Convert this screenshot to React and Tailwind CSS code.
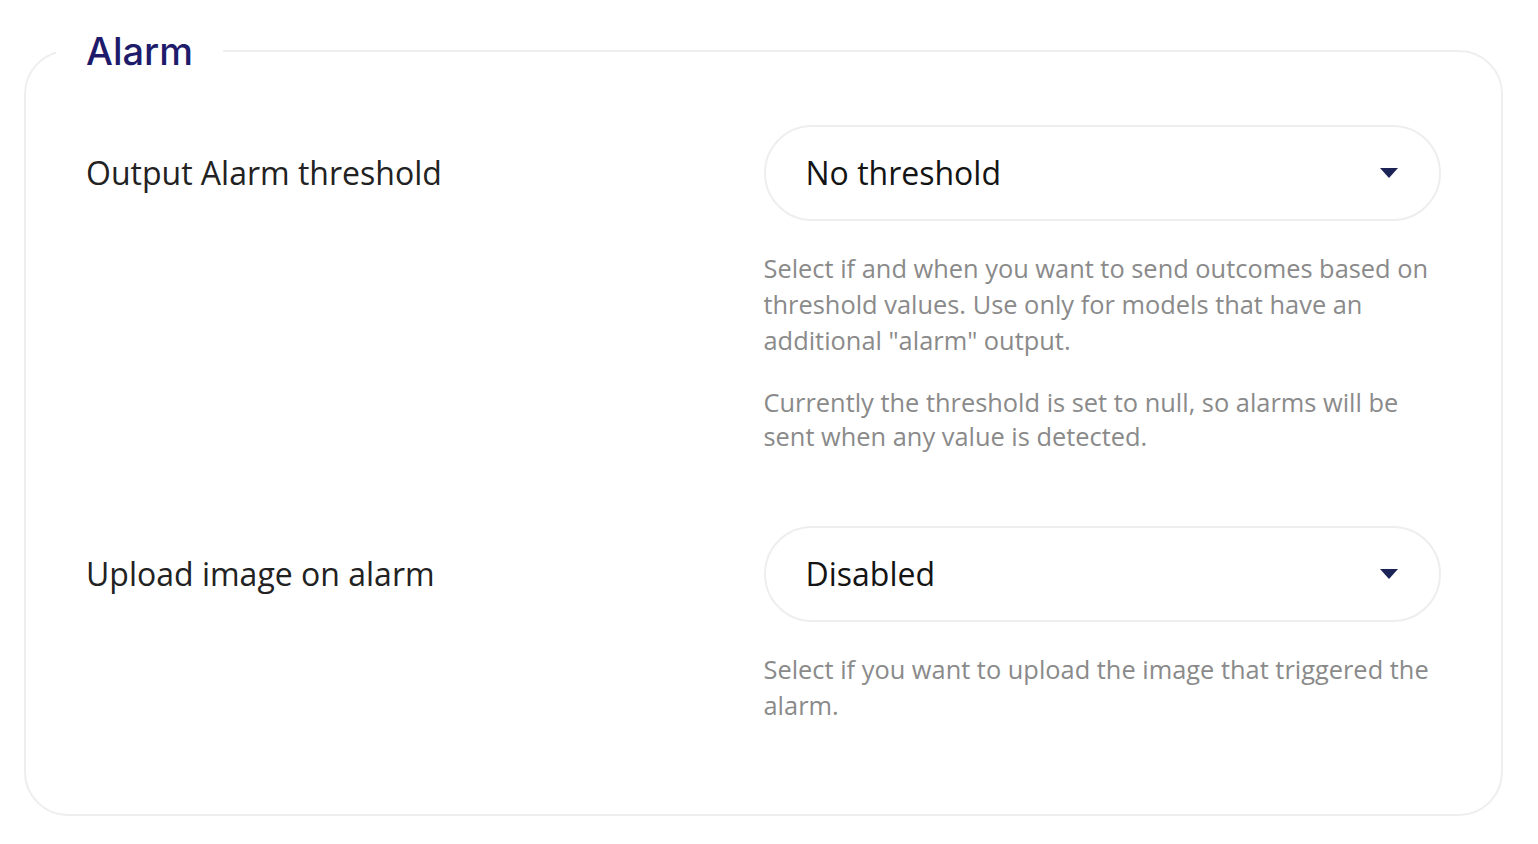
import React from 'react';

const Caret = () => (
  <svg width="20" height="12" viewBox="0 0 20 12" className="shrink-0">
    <path d="M1 1h18L10 11z" fill="#1c2457" />
  </svg>
);

const SettingRow = ({ label, value, children }) => (
  <div className="grid grid-cols-2">
    <div className="flex h-[96px] items-center text-[32px] text-[#222222]">{label}</div>
    <div className="flex flex-col">
      <button className="flex h-[96px] w-full items-center justify-between rounded-full border-2 border-[#eeeeee] pl-[40px] pr-[40px] text-left text-[32px] text-[#141414]">
        <span>{value}</span>
        <Caret />
      </button>
      <div className="mt-[29px] flex flex-col gap-[27px] text-[25.4px] leading-[36px] text-[#8a8a8a]">
        {children}
      </div>
    </div>
  </div>
);

export default function App() {
  return (
    <div className="min-h-screen bg-white pt-[29px] font-['Open_Sans',sans-serif]">
      <fieldset className="ml-[24px] w-[1479px] rounded-[44px] border-2 border-[#eeeeee] px-[30px] pb-[91px]">
        <legend className="px-[30px] font-['Inter',sans-serif] text-[38px] font-medium leading-[44px] text-[#1f1b6b]">
          Alarm
        </legend>
        <div className="flex flex-col gap-[73px] px-[30px] pt-[52px]">
          <SettingRow label="Output Alarm threshold" value="No threshold">
            <p>
              Select if and when you want to send outcomes based on threshold values. Use only for models that have an additional "alarm" output.
            </p>
            <p className="leading-[34px]">Currently the threshold is set to null, so alarms will be sent when any value is detected.</p>
          </SettingRow>
          <SettingRow label="Upload image on alarm" value="Disabled">
            <p>Select if you want to upload the image that triggered the alarm.</p>
          </SettingRow>
        </div>
      </fieldset>
    </div>
  );
}
